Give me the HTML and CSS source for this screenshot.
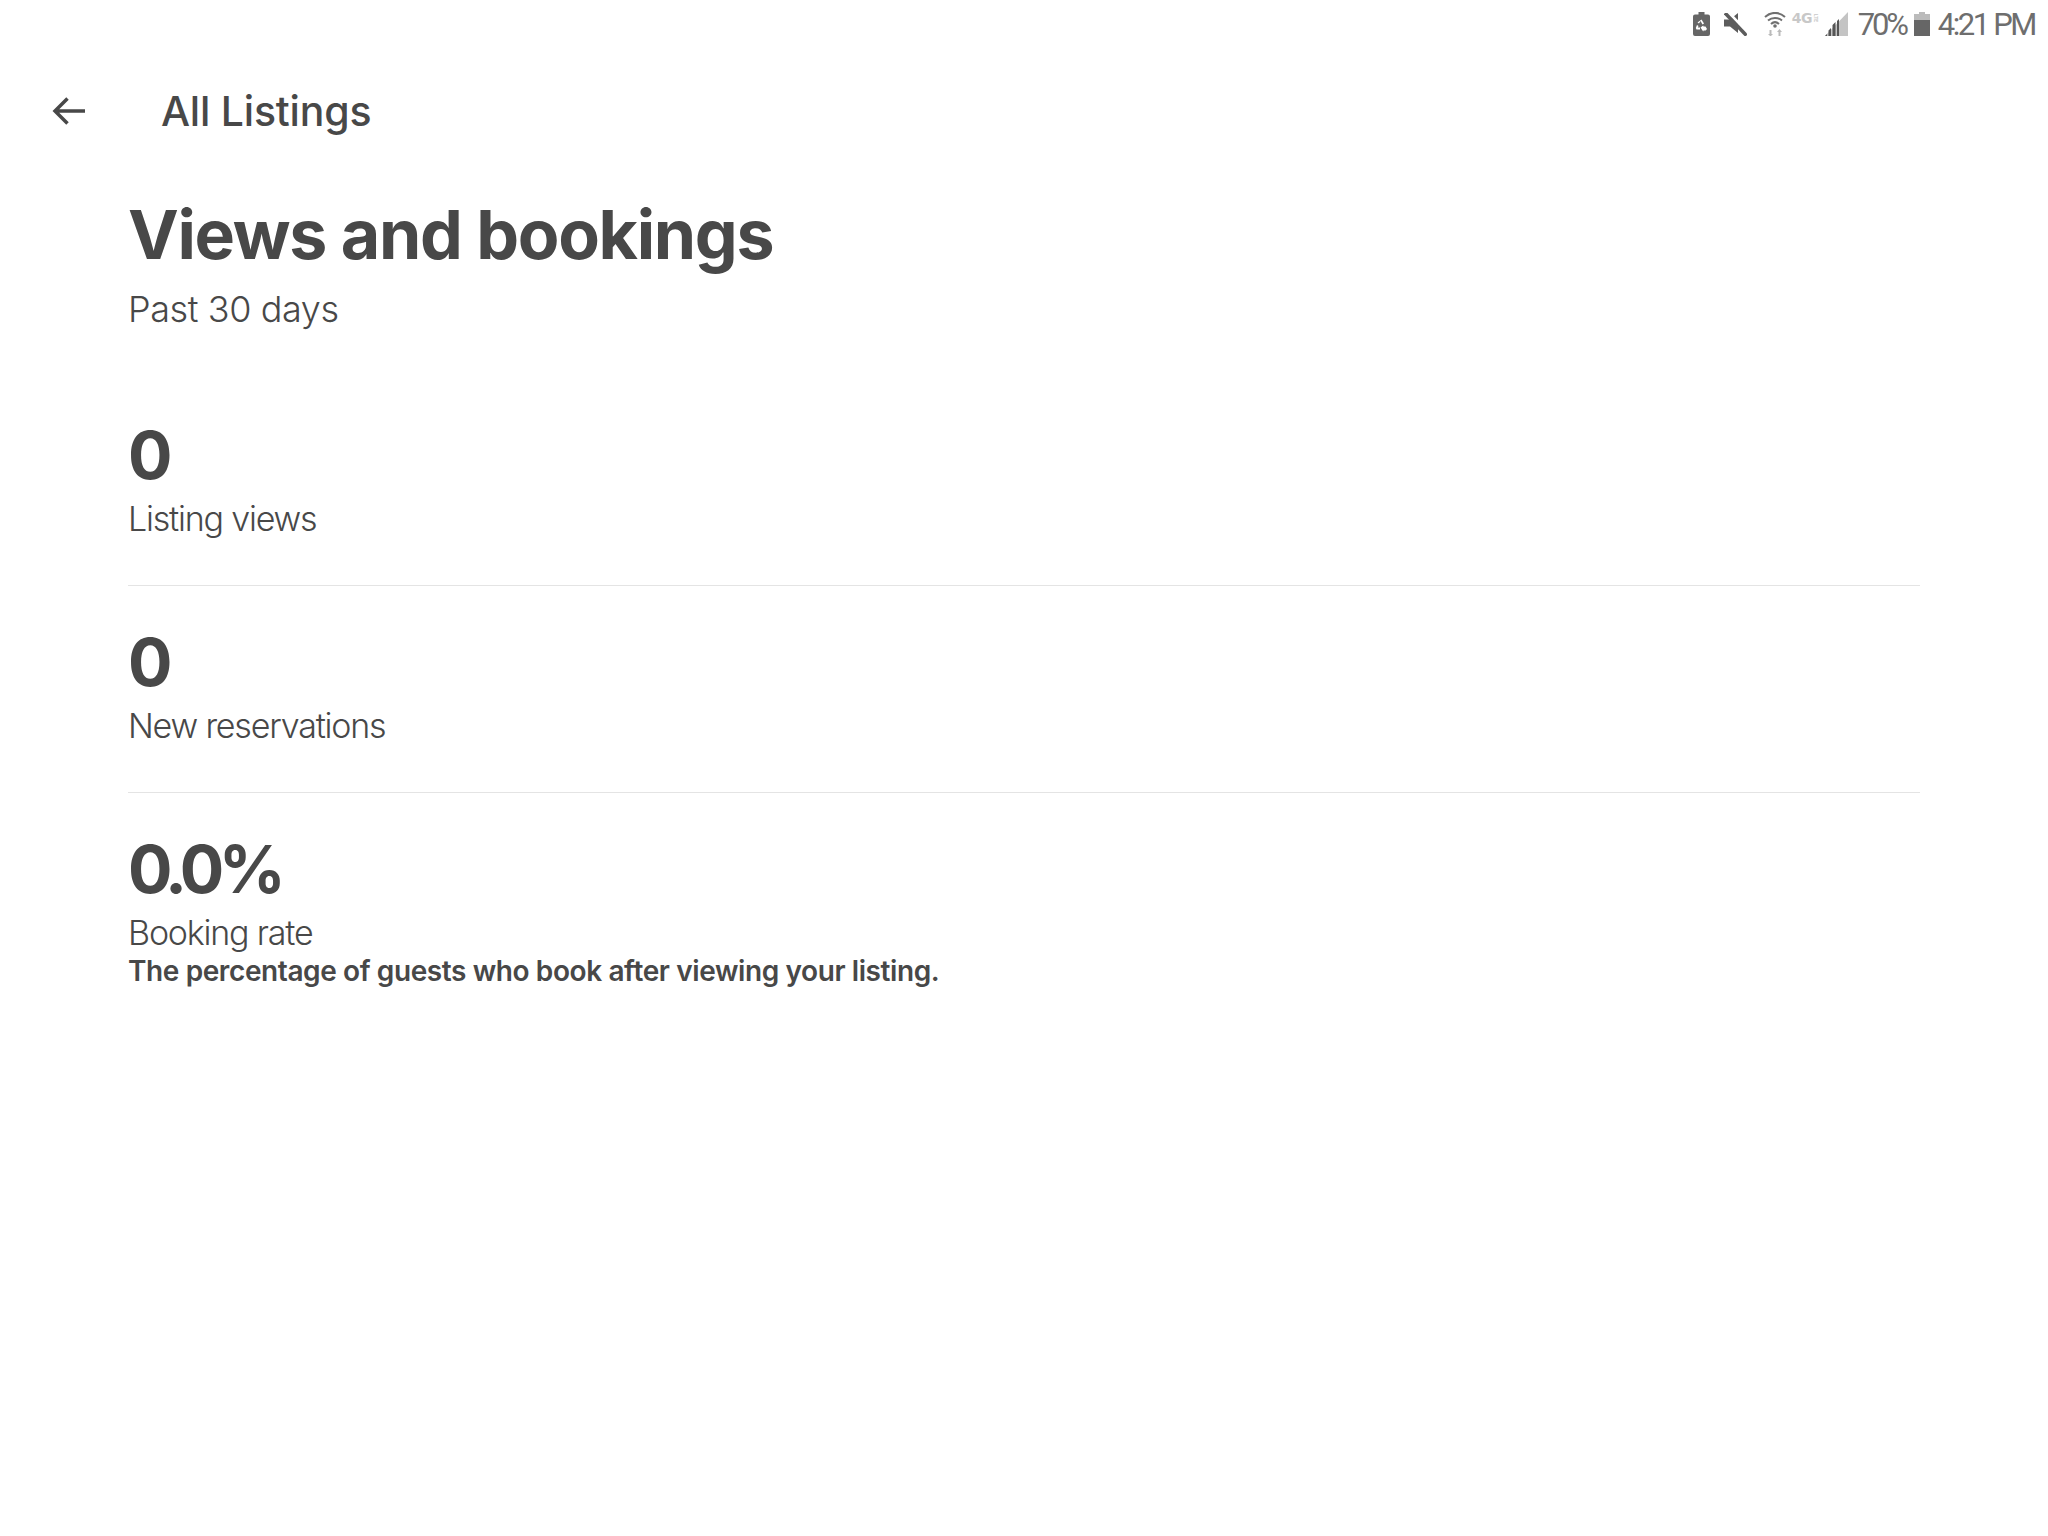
FILE: index.html
```html
<!DOCTYPE html>
<html lang="en">
<head>
<meta charset="utf-8">
<title>Views and bookings</title>
<link rel="stylesheet" href="styles.css">
</head>
<body>
<div class="status">
  <svg class="ic-batt" viewBox="0 0 17 24"><path fill="#666" d="M5.500 0h6v2.500h3.500a2 2 0 0 1 2 2V22a2 2 0 0 1-2 2H2a2 2 0 0 1-2-2V4.500a2 2 0 0 1 2-2h3.500z"/><g fill="#fff"><path d="M8.500 7.500l2.500 4-1.500 1-2-3.500-1.500 2.500-1.500-1z"/><path d="M4 13l1.500 1-.7 1.500H7v2H3.500L2.800 16zM7.500 15.500l2.700-2 .3 1h2l1.500 2.500-1.300 1.500H10.500l-.3 1z"/></g></svg>
  <svg class="ic-mute" viewBox="0 0 23 23"><path fill="#5c5c5c" d="M0 6.500h6L14 0v20l-8-6.500H0z"/><path stroke="#fff" stroke-width="3" d="M5 0l19 20"/><path stroke="#5c5c5c" stroke-width="3.600" d="M1 0l21.500 22.500"/></svg>
  <svg class="ic-wifi" viewBox="0 0 22 24"><g fill="none" stroke="#707070" stroke-width="2"><path d="M1 5c6-5.500 14-5.500 20 0"/><path d="M4 8.500c4-3.500 10-3.500 14 0"/><path d="M7 12c2.500-2.300 5.500-2.300 8 0"/></g><circle cx="11" cy="14" r="1.800" fill="#707070"/><path fill="#bbb" d="M5.500 18v4H4l2.500 2.500L9 22H7.500v-4zM14.500 24v-4H13l2.500-3 2.500 3h-1.500v4z"/></svg>
  <span class="lte"><span class="lte-g">4G</span><span class="lte-s">LTE</span></span>
  <svg class="ic-signal" viewBox="0 0 23 24"><path fill="#c4c4c4" d="M23 0v24H0z"/><path fill="#555" d="M0 24l2-2v2zM3.500 24v-5.500l2.500-2.500v8zM7.500 24v-11l3-3v14zM12 24V9l2-2v17z"/></svg>
  <span class="pct">70%</span>
  <svg class="ic-level" viewBox="0 0 16 24"><path fill="#bbb" d="M5 0h6v2h5v22H0V2h5z"/><path fill="#666" d="M0 8h16v16H0z"/></svg>
  <span class="time">4:21 PM</span>
</div>
<header class="bar">
  <svg class="back" viewBox="0 0 34 30"><path fill="none" stroke="#484848" stroke-width="3.500" d="M33 15H3M15.500 2.500L3 15l12.500 12.500"/></svg>
  <span class="bar-title">All Listings</span>
</header>
<main class="content">
  <h1 class="title">Views and bookings</h1>
  <p class="period">Past 30 days</p>
  <section class="metric">
    <div class="num">0</div>
    <div class="label">Listing views</div>
  </section>
  <section class="metric">
    <div class="num">0</div>
    <div class="label">New reservations</div>
  </section>
  <section class="metric last">
    <div class="num">0.0%</div>
    <div class="label">Booking rate</div>
    <div class="note">The percentage of guests who book after viewing your listing.</div>
  </section>
</main>
</body>
</html>
```
FILE: styles.css
```css
* { box-sizing: border-box; }
html, body { margin: 0; height: 100%; }
body { background: #fff; color: #484848; font-family: Inter, "Liberation Sans", sans-serif; overflow: hidden; }
.status { height: 48px; display: flex; align-items: center; justify-content: flex-end; padding: 0 13px 0 0; color: #6e6e6e; font-family: Roboto, sans-serif; font-size: 31px; letter-spacing: -2.400px; }
.status svg { display: block; flex: none; }
.ic-batt { width: 17px; height: 24px; margin-right: 14px; }
.ic-mute { width: 23px; height: 23px; margin-right: 17px; }
.ic-wifi { width: 22px; height: 24px; margin-right: 6px; }
.lte { width: 28px; height: 12px; margin-right: 5px; margin-bottom: 12px; display: flex; align-items: center; color: #c8c8c8; font-weight: 700; letter-spacing: 0; white-space: nowrap; }
.lte-g { font-family: "DejaVu Sans", sans-serif; font-size: 14px; letter-spacing: -0.5px; }
.lte-s { font-size: 5px; writing-mode: vertical-rl; line-height: 6px; margin-left: 1px; }
.ic-signal { width: 23px; height: 24px; margin-right: 10px; }
.pct { margin-right: 8px; letter-spacing: -3.200px; }
.ic-level { width: 16px; height: 24px; margin-right: 8px; }
.bar { height: 126px; display: flex; align-items: center; padding: 0 0 0 52px; }
.back { width: 34px; height: 30px; margin-right: 75px; }
.bar-title { font-size: 41px; font-weight: 500; letter-spacing: -0.2px; }
.content { padding: 20px 128px 0; }
.title { margin: 0; font-size: 68px; line-height: 80px; font-weight: 700; letter-spacing: -1.33px; }
.period { margin: 11px 0 46px; font-size: 36px; line-height: 48px; font-weight: 300; letter-spacing: -0.4px; }
.metric { border-bottom: 1px solid #e4e4e4; padding: 36px 0 45px; height: 207px; }
.metric.last { border-bottom: 0; height: auto; }
.num { font-size: 66px; line-height: 80px; font-weight: 700; letter-spacing: -5.500px; margin-bottom: 3px; }
.label { font-size: 34px; line-height: 42px; font-weight: 300; letter-spacing: -1.200px; }
.note { font-size: 28px; line-height: 34px; font-weight: 600; letter-spacing: -0.4px; }
```
